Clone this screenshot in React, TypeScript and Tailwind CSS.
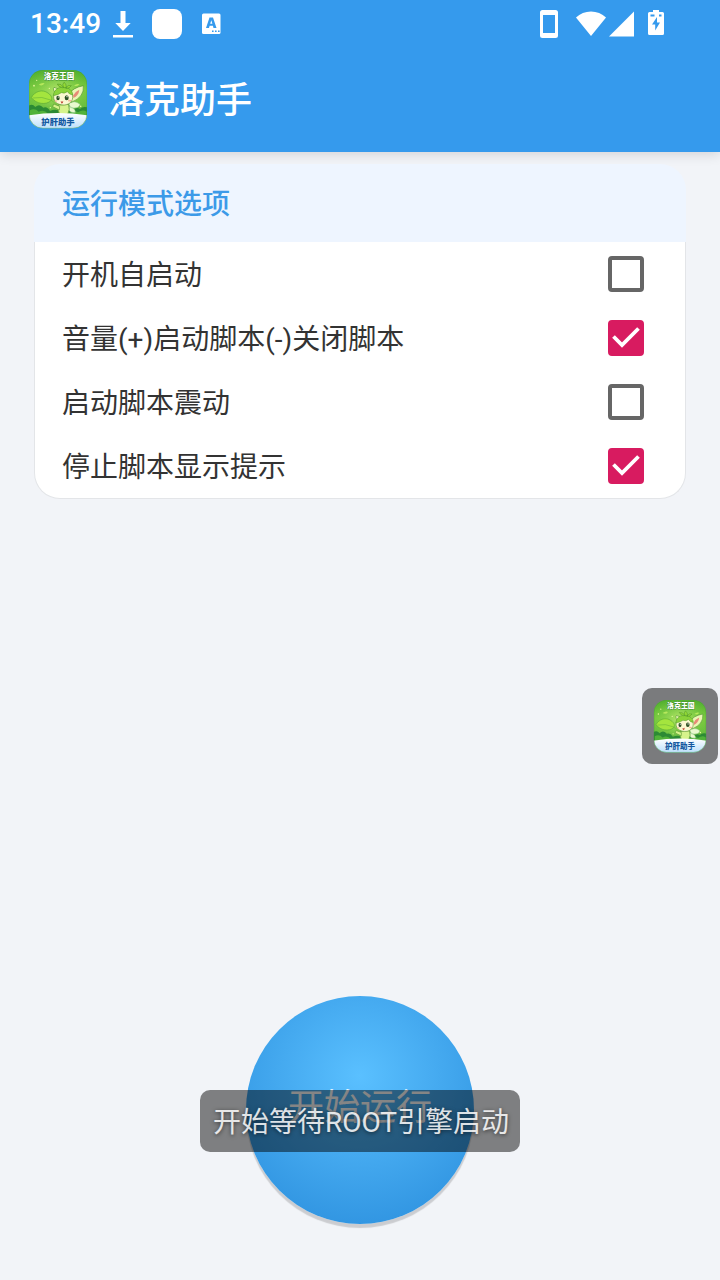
import { useState } from "react";

function AppIcon({ className }: { className: string }) {
  return (
    <svg viewBox="0 0 180 180" className={className} role="img" aria-label="洛克王国 护肝助手">
      <defs>
        <linearGradient id="leafSky" x1="0" y1="0" x2="0" y2="1">
          <stop offset="0" stopColor="#4fae2e" />
          <stop offset="0.35" stopColor="#78c93e" />
          <stop offset="0.6" stopColor="#6cc03e" />
          <stop offset="1" stopColor="#2f8f35" />
        </linearGradient>
        <radialGradient id="leafGlow" cx="0.5" cy="0.45" r="0.5">
          <stop offset="0" stopColor="#cdf07c" stopOpacity="0.75" />
          <stop offset="1" stopColor="#8fd84e" stopOpacity="0" />
        </radialGradient>
        <linearGradient id="plate" x1="0" y1="0" x2="0" y2="1">
          <stop offset="0" stopColor="#ffffff" />
          <stop offset="1" stopColor="#b9defb" />
        </linearGradient>
        <clipPath id="iconShape">
          <rect x="3" y="3" width="174" height="175" rx="42" />
        </clipPath>
      </defs>
      <g clipPath="url(#iconShape)">
        <rect width="180" height="180" fill="url(#leafSky)" />
        <rect width="180" height="150" fill="url(#leafGlow)" />
        <path d="M0 112q12-10 22 2 12-12 24 2 12-4 20 10 18-8 34 2 20-8 34 0 8-16 22-8 10-10 24-4v40H0z" fill="#2c8a34" />
        <path d="M6 124q14-8 26 4 16-8 28 6h60q16-14 30-4 14-10 26-2v20H6z" fill="#51b23a" />
        <path d="M10 86C20 66 44 60 60 72c12 8 14 18 8 24-14 12-42 10-58-10z" fill="#a4e53e" stroke="#5cab33" strokeWidth="2" />
        <path d="M14 87q28-6 54 6 12 6 18 16" fill="none" stroke="#6db738" strokeWidth="2" />
        <path d="M32 47q10-8 18-4-6 10-18 4zM138 50q8-8 16-4-4 8-16 4z" fill="#b6e85c" />
        <g fill="#e7fa9d">
          <circle cx="18" cy="50" r="2.5" />
          <circle cx="64" cy="58" r="2" />
          <circle cx="26" cy="34" r="2" />
          <circle cx="158" cy="112" r="2.5" />
          <circle cx="67" cy="116" r="2" />
        </g>
        <path d="M122 104q18-12 34 2-2 14-28 10zM120 112q22 4 22 18-14 4-24-12z" fill="#e9f9cf" stroke="#8fc68b" strokeWidth="1.5" />
        <path d="M86 77Q72 62 78 55q14 2 20 13zM122 76q12-20 44-26 4 34-36 50z" fill="#eaf6b4" stroke="#4f9430" strokeWidth="2" />
        <path d="M136 79q6-12 18-17-2 18-18 25z" fill="#e88a77" />
        <path d="M91 108q-4 14 4 28h24q8-14 3-30z" fill="#d6f38b" stroke="#5a9a33" strokeWidth="2.5" />
        <path d="M95 112l-18-7-3 8 20 10z" fill="#d6f38b" stroke="#5a9a33" strokeWidth="2" />
        <path d="M77 84c0-17 14-25 30-24 17 1 28 10 27 26-1 14-14 23-29 22-16-1-28-9-28-24z" fill="#fbf8d2" stroke="#5f9432" strokeWidth="2" />
        <path d="M76 80c2-20 16-26 31-25 16 1 27 9 27 23q-10-1-16-10-8 7-18 3-9 7-24 9z" fill="#8bd33a" stroke="#4f962b" strokeWidth="1.5" />
        <path d="M107 56q-6-10 1-16 8 3 7 16zM103 56q-13-3-15-11 12-2 18 10zM113 56q8-10 17-6-5 9-16 8z" fill="#94d936" stroke="#438c29" strokeWidth="1.5" />
        <ellipse cx="90" cy="87" rx="5" ry="7" fill="#2c4f24" />
        <ellipse cx="116" cy="86" rx="6" ry="7.5" fill="#2c4f24" />
        <circle cx="91" cy="84" r="1.8" fill="#fff" />
        <circle cx="117" cy="83" r="2" fill="#fff" />
        <ellipse cx="84" cy="96" rx="4" ry="2" fill="#f4b596" />
        <ellipse cx="125" cy="95" rx="5" ry="2.5" fill="#f4b596" />
        <path d="M98 96q5 4 8-1-1 10-6 8z" fill="#c24a3a" />
        <path d="M0 139q90-14 180 0v41H0z" fill="url(#plate)" />
        <rect x="3" y="3" width="174" height="175" rx="42" fill="none" stroke="#3b9b3c" strokeOpacity="0.5" strokeWidth="3" />
      </g>
      <text x="93" y="30" textAnchor="middle" fontSize="23" fontWeight="900" fill="#fff" stroke="#3f8f2c" strokeWidth="3" paintOrder="stroke">
        洛克王国
      </text>
      <text x="90" y="168" textAnchor="middle" fontSize="25" fontWeight="900" fill="#14589f">
        护肝助手
      </text>
    </svg>
  );
}

function StatusBar() {
  return (
    <div className="flex h-12 items-center justify-between pl-[30px] pr-14 text-white">
      <div className="flex items-center">
        <span className="w-[71px] whitespace-nowrap text-[28px] leading-8 font-medium">13:49</span>
        <svg viewBox="0 0 20 28" className="ml-3 h-7 w-5" fill="currentColor" aria-hidden="true">
          <path d="M7.500 1h5v12h5.200L10 21 2.300 13h5.200zM0 25h20v2.400H0z" />
        </svg>
        <span className="ml-[19px] size-[30px] rounded-lg bg-white" />
        <svg viewBox="0 0 20 22" className="ml-5 h-[22px] w-5" aria-hidden="true">
          <rect x="0" y="0.500" width="18.500" height="20.500" rx="1.500" fill="#fff" />
          <path d="M4 15 7.500 4.500h3.500L14.500 15h-3l-.6-2.200H7.600L7 15zM8.200 10.700h2.200L9.300 7.200z" fill="#359aed" fillRule="evenodd" />
          <path d="M10 17.500h1.600V19H10zM13 17.500h1.600V19H13zM16 17.500h1.600V19H16z" fill="#359aed" />
        </svg>
      </div>
      <div className="flex items-center">
        <svg viewBox="0 0 18 28" className="h-7 w-[18px]" aria-hidden="true">
          <path fill="#fff" fillRule="evenodd" d="M2.500 0h13A2.500 2.500 0 0 1 18 2.500v23a2.500 2.500 0 0 1-2.500 2.500h-13A2.500 2.500 0 0 1 0 25.500v-23A2.500 2.500 0 0 1 2.500 0zM3 5v18h12V5z" />
        </svg>
        <svg viewBox="0 0 30 26" className="ml-[18px] h-[26px] w-[30px]" fill="#fff" aria-hidden="true">
          <path d="M15 25 0 6.500C4 2.800 9.300 0.500 15 0.500s11 2.300 15 6z" />
        </svg>
        <svg viewBox="0 0 25 26" className="ml-[3px] h-[26px] w-[25px]" fill="#fff" aria-hidden="true">
          <path d="M25 0.500v25H0z" />
        </svg>
        <svg viewBox="0 0 16 26" className="mb-0.5 ml-3.5 h-[26px] w-4" aria-hidden="true">
          <path fill="#fff" d="M5 0h6v2h3.500A1.500 1.500 0 0 1 16 3.500v20a1.500 1.500 0 0 1-1.500 1.500h-13A1.500 1.500 0 0 1 0 23.500v-20A1.500 1.500 0 0 1 1.500 2H5z" />
          <path fill="#359aed" d="M9 7 4 14.500h3.200V20.500L12 12.500H9zM2.500 4.500h4v2h-4zM11 4.500h2.500v2H11z" />
        </svg>
      </div>
    </div>
  );
}

const options = [
  { id: "boot", label: "开机自启动", on: false },
  { id: "volume", label: "音量(+)启动脚本(-)关闭脚本", on: true },
  { id: "vibrate", label: "启动脚本震动", on: false },
  { id: "stop", label: "停止脚本显示提示", on: true },
];

function OptionRow({ id, label, on }: { id: string; label: string; on: boolean }) {
  const [checked, setChecked] = useState(on);
  return (
    <div className="flex h-16 items-center justify-between pr-[41px] pl-[27px]">
      <label htmlFor={id} className="pt-1 text-[28px] leading-10 text-[#333333]">
        {label}
      </label>
      <span className="grid size-9 shrink-0">
        <input
          id={id}
          type="checkbox"
          checked={checked}
          onChange={(e) => setChecked(e.target.checked)}
          className="col-start-1 row-start-1 size-9 appearance-none rounded-[4px] border-4 border-[#666666] bg-white checked:border-[#d81b60] checked:bg-[#d81b60]"
        />
        {checked && (
          <svg viewBox="0 0 36 36" className="pointer-events-none col-start-1 row-start-1 size-9" aria-hidden="true">
            <path d="M5.500 16.500 14 25 30.500 8.500" fill="none" stroke="#fff" strokeWidth="3.800" />
          </svg>
        )}
      </span>
    </div>
  );
}

export default function App() {
  return (
    <div className="relative flex min-h-screen flex-col overflow-hidden bg-[#f2f4f8] font-[Roboto,'Noto_Sans_CJK_SC',sans-serif]">
      <header className="bg-[#359aed] shadow-[0_2px_12px_rgba(0,0,0,0.14)]">
        <StatusBar />
        <div className="flex h-[104px] items-start pt-[21px] pl-7">
          <AppIcon className="size-[60px]" />
          <h1 className="ml-5 pt-1.5 text-[36px] leading-[52px] font-medium text-white">洛克助手</h1>
        </div>
      </header>

      <main className="flex flex-1 flex-col">
        <section className="mx-[34px] mt-3">
          <h2 className="flex h-[78px] items-center rounded-t-[26px] bg-[#eef5ff] pt-1 pl-7 text-[28px] leading-10 font-medium text-[#3c9ae8]">
            运行模式选项
          </h2>
          <div className="rounded-b-[26px] border-x border-b border-[#e3e5e8] bg-white">
            {options.map((o) => (
              <OptionRow key={o.id} {...o} />
            ))}
          </div>
        </section>

        <div className="mt-auto mb-14 flex justify-center">
          <button
            type="button"
            className="size-[228px] rounded-full bg-[radial-gradient(circle_160px_at_50%_35%,#5ac0ff,#2f93e0)] pb-1 text-[36px] text-white shadow-[0_4px_1px_rgba(0,0,0,0.16)]"
          >
            开始运行
          </button>
        </div>
      </main>

      <button
        type="button"
        aria-label="洛克助手"
        className="absolute top-[688px] right-[2px] grid size-[76px] place-items-center rounded-[10px] bg-[#7a7b7d]"
      >
        <AppIcon className="size-[54px]" />
      </button>

      <div
        role="status"
        className="pointer-events-none absolute bottom-32 left-1/2 flex h-[62px] w-80 -translate-x-1/2 items-center justify-center whitespace-nowrap rounded-[10px] bg-black/48 pt-1 pl-0.5 text-[28px] text-white/85 [text-shadow:0_1px_4px_rgba(0,0,0,0.6)]"
      >
        开始等待ROOT引擎启动
      </div>
    </div>
  );
}
